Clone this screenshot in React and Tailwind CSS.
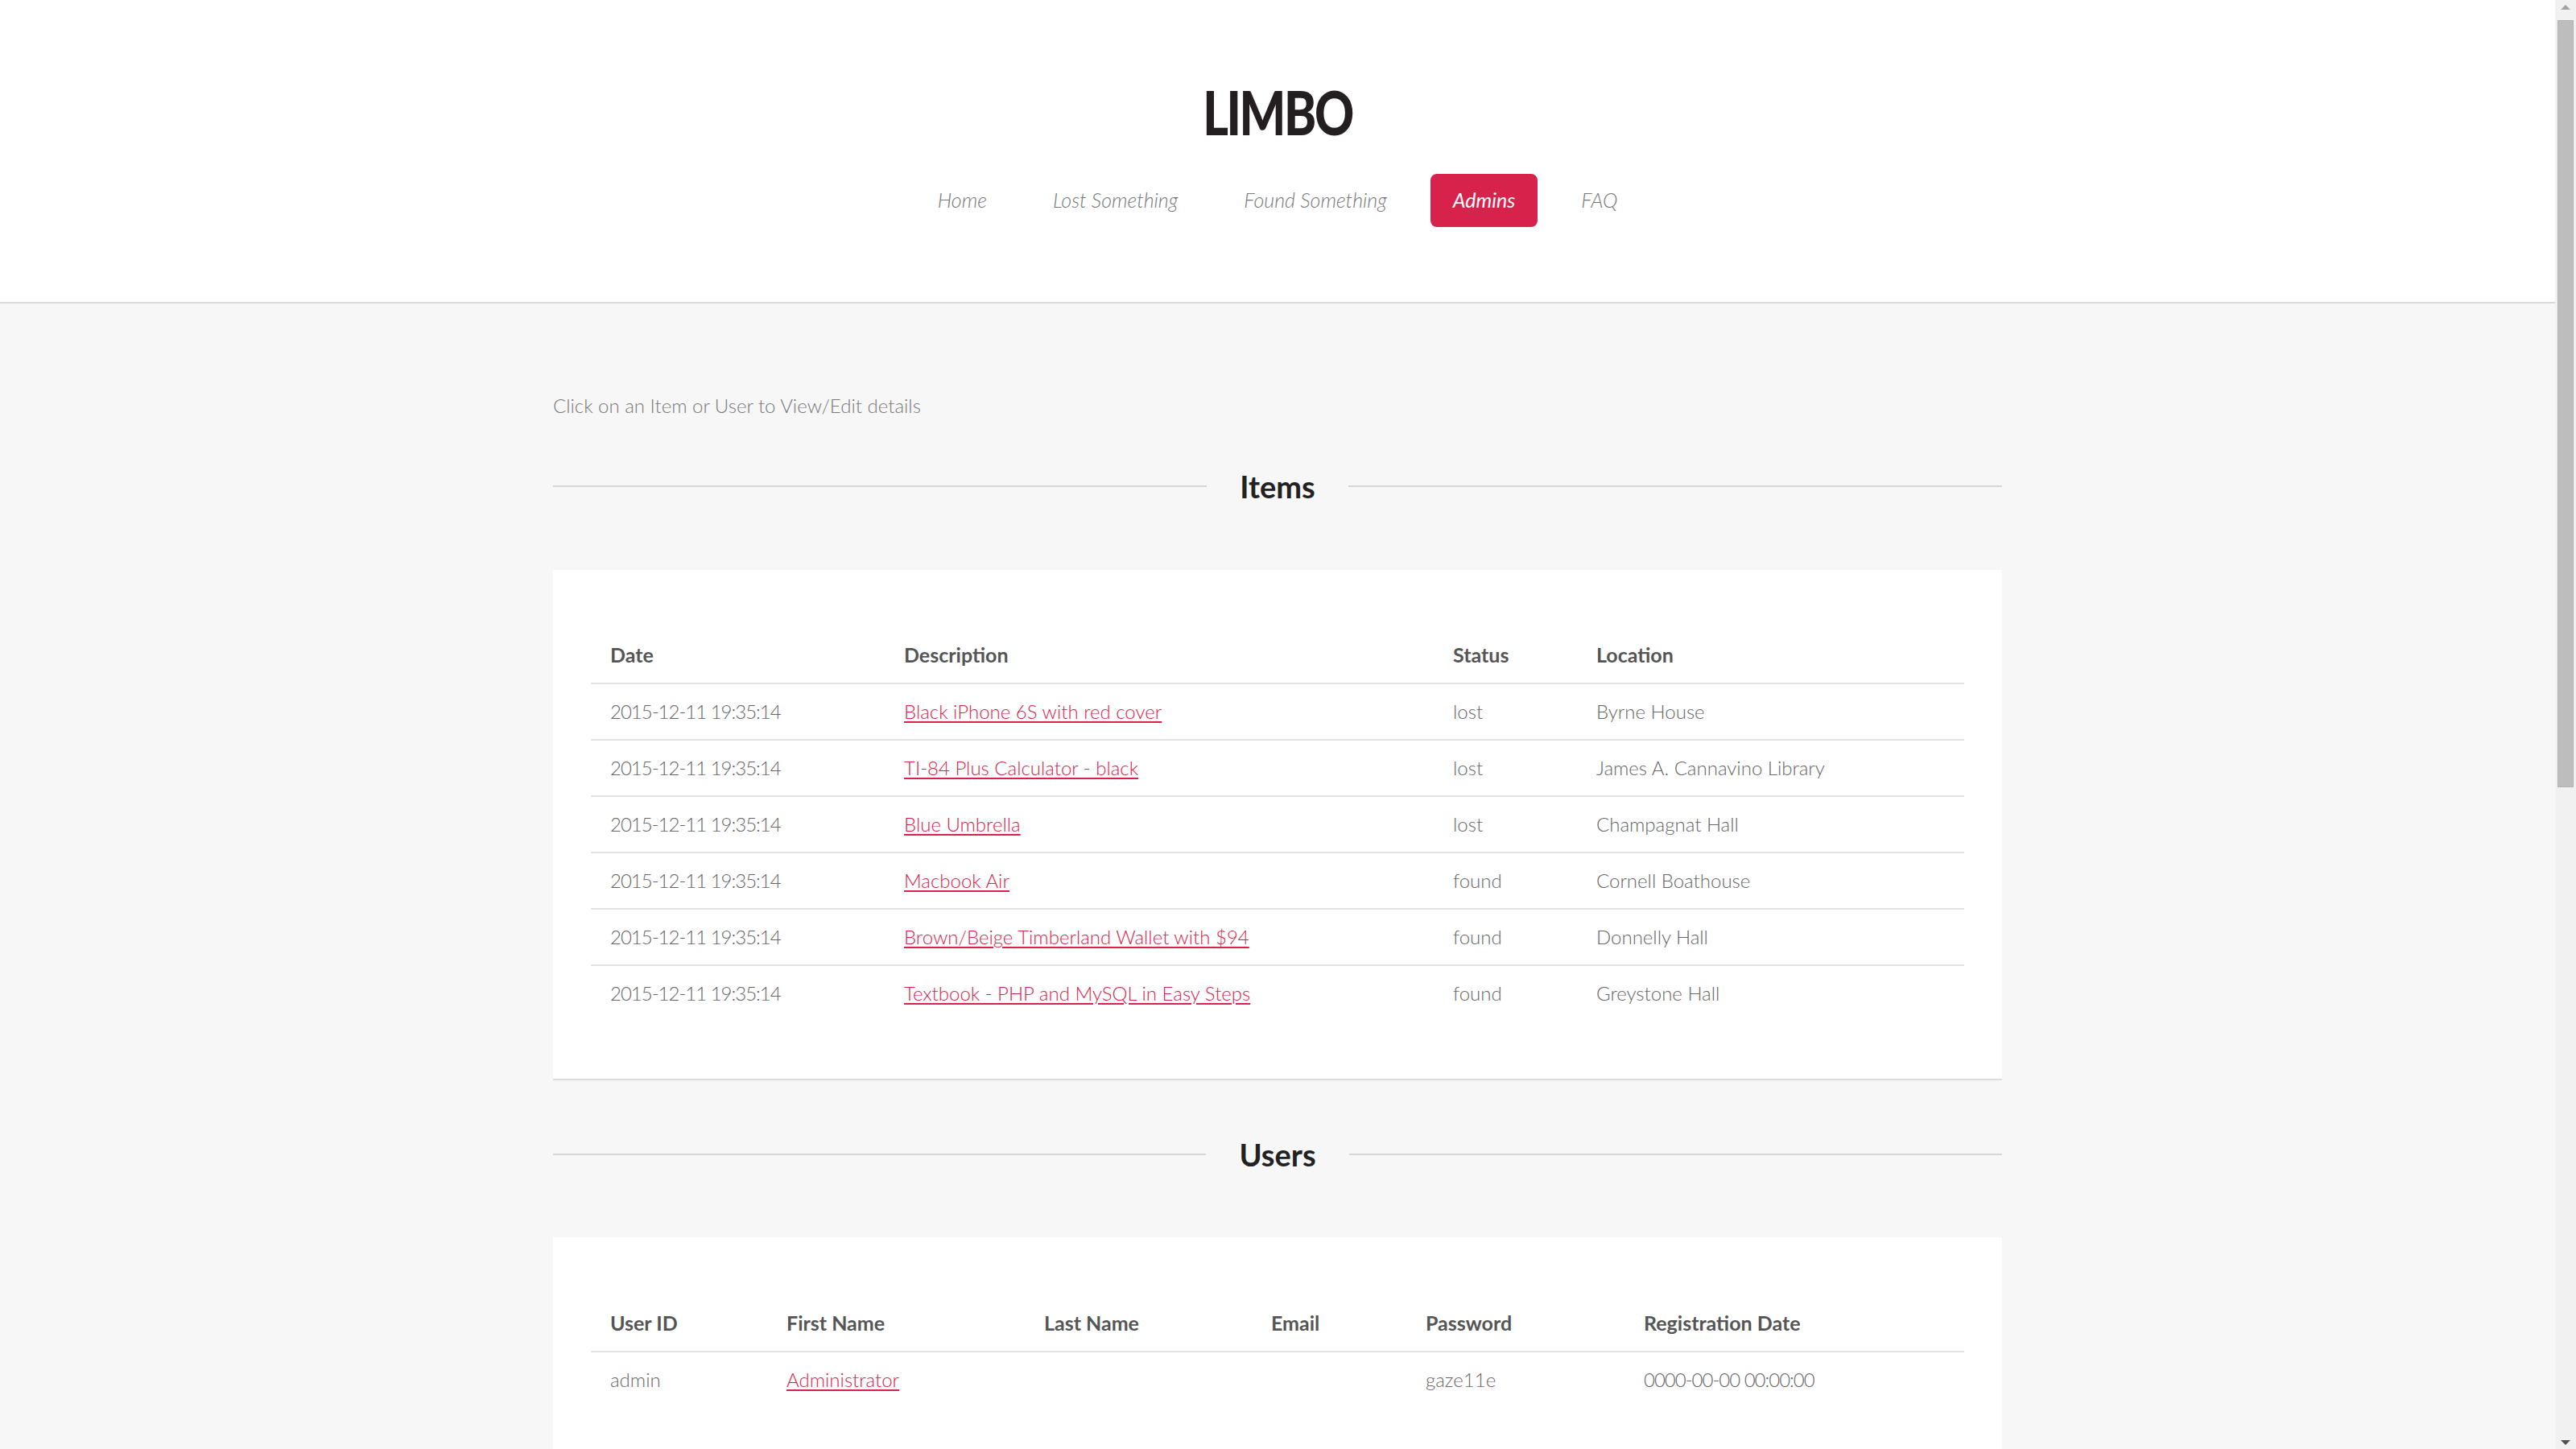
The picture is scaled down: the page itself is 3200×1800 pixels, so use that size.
const NAV = ['Home', 'Lost Something', 'Found Something', 'Admins', 'FAQ'];

const ITEMS = [
  { date: '2015-12-11 19:35:14', desc: 'Black iPhone 6S with red cover', status: 'lost', loc: 'Byrne House' },
  { date: '2015-12-11 19:35:14', desc: 'TI-84 Plus Calculator - black', status: 'lost', loc: 'James A. Cannavino Library' },
  { date: '2015-12-11 19:35:14', desc: 'Blue Umbrella', status: 'lost', loc: 'Champagnat Hall' },
  { date: '2015-12-11 19:35:14', desc: 'Macbook Air', status: 'found', loc: 'Cornell Boathouse' },
  { date: '2015-12-11 19:35:14', desc: 'Brown/Beige Timberland Wallet with $94', status: 'found', loc: 'Donnelly Hall' },
  { date: '2015-12-11 19:35:14', desc: 'Textbook - PHP and MySQL in Easy Steps', status: 'found', loc: 'Greystone Hall' },
];

function SectionTitle({ children }) {
  return (
    <div className="flex items-center">
      <div className="h-[2px] flex-1 bg-[#d6d6d6]" />
      <h2 className="px-[41px] text-[38px] font-bold leading-[50px] text-[#222]">{children}</h2>
      <div className="h-[2px] flex-1 bg-[#d6d6d6]" />
    </div>
  );
}

function Link({ children }) {
  return (
    <a href="#" className="text-[#d7234b] underline decoration-2 underline-offset-[3px]">
      {children}
    </a>
  );
}

function Scrollbar() {
  return (
    <div className="flex w-[26px] shrink-0 flex-col items-center bg-[#f1f1f1]">
      <div className="flex h-[17px] items-center justify-center">
        <svg width="12" height="6" viewBox="0 0 12 6">
          <path d="M0 6 L6 0 L12 6 Z" fill="#a3a3a3" />
        </svg>
      </div>
      <div className="mt-[8px] h-[953px] w-[20px] border border-[#b3b3b3] bg-[#bdbdbd]" />
      <div className="flex-1" />
      <div className="flex h-[17px] items-center justify-center">
        <svg width="12" height="6" viewBox="0 0 12 6">
          <path d="M0 0 L6 6 L12 0 Z" fill="#505050" />
        </svg>
      </div>
    </div>
  );
}

export default function App() {
  return (
    <div className="flex h-[1800px] overflow-hidden bg-[#f7f7f7] font-['Lato','Roboto',sans-serif]">
      <div className="min-w-0 flex-1 overflow-hidden">
        {/* Header */}
        <header className="flex h-[377px] flex-col items-center border-b-2 border-[#d9d9d9] bg-white">
          <h1 className="mt-[99px] scale-x-[0.8] text-[76px] font-black leading-[80px] tracking-[-3px] text-[#231f20]">
            LIMBO
          </h1>
          <nav className="mt-[37px] flex gap-[26px]">
            {NAV.map((n) => (
              <a
                key={n}
                href="#"
                className={
                  n === 'Admins'
                    ? 'flex h-[66px] items-center rounded-[8px] bg-[#d7234b] px-[28px] text-[25px] font-normal italic text-white'
                    : 'flex h-[66px] items-center px-[28px] text-[25px] font-light italic text-[#777]'
                }
              >
                {n}
              </a>
            ))}
          </nav>
        </header>

        <main className="mx-auto w-[1800px]">
          <p className="mt-[109px] text-[24px] font-light leading-[36px] text-[#777]">
            Click on an Item or User to View/Edit details
          </p>

          <div className="mt-[57px]">
            <SectionTitle>Items</SectionTitle>
          </div>

          {/* Items card */}
          <div className="mt-[79px] border-b-2 border-[#dcdcdc] bg-white px-[47px] pb-[72px] pt-[72px]">
            <div className="grid grid-cols-[365px_682px_178px_1fr] border-b-2 border-[#e2e2e2] text-[25px] font-bold text-[#555]">
              {['Date', 'Description', 'Status', 'Location'].map((h) => (
                <div key={h} className="flex h-[68px] items-center px-[24px]">{h}</div>
              ))}
            </div>
            {ITEMS.map((it, i) => (
              <div
                key={i}
                className={`grid grid-cols-[365px_682px_178px_1fr] text-[24px] font-light text-[#666] ${
                  i < ITEMS.length - 1 ? 'border-b-2 border-[#e2e2e2]' : ''
                }`}
              >
                <div className="flex h-[68px] items-center px-[24px] tracking-[-1px]">{it.date}</div>
                <div className="flex h-[68px] items-center px-[24px]"><Link>{it.desc}</Link></div>
                <div className="flex h-[68px] items-center px-[24px]">{it.status}</div>
                <div className="flex h-[68px] items-center px-[24px]">{it.loc}</div>
              </div>
            ))}
          </div>

          <div className="mt-[67px]">
            <SectionTitle>Users</SectionTitle>
          </div>

          {/* Users card */}
          <div className="mt-[78px] border-b-2 border-[#dcdcdc] bg-white px-[47px] pb-[72px] pt-[73px]">
            <div className="grid grid-cols-[219px_320px_282px_192px_271px_1fr] border-b-2 border-[#e2e2e2] text-[25px] font-bold text-[#555]">
              {['User ID', 'First Name', 'Last Name', 'Email', 'Password', 'Registration Date'].map((h) => (
                <div key={h} className="flex h-[68px] items-center px-[24px]">{h}</div>
              ))}
            </div>
            <div className="grid grid-cols-[219px_320px_282px_192px_271px_1fr] text-[24px] font-light text-[#666]">
              <div className="flex h-[68px] items-center px-[24px]">admin</div>
              <div className="flex h-[68px] items-center px-[24px]"><Link>Administrator</Link></div>
              <div className="flex h-[68px] items-center px-[24px]"></div>
              <div className="flex h-[68px] items-center px-[24px]"></div>
              <div className="flex h-[68px] items-center px-[24px]">gaze11e</div>
              <div className="flex h-[68px] items-center px-[24px] tracking-[-1px]">0000-00-00 00:00:00</div>
            </div>
          </div>
        </main>
      </div>
      <Scrollbar />
    </div>
  );
}
